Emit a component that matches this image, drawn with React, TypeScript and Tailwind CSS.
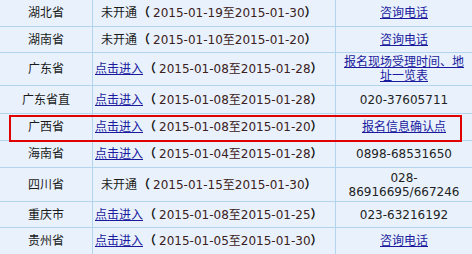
import React from "react";

type Row = {
  prov: string;
  open: boolean;
  start: string;
  end: string;
  third: { text: string[]; link: boolean };
  h: string;
};

const rows: Row[] = [
  { prov: "湖北省", open: false, start: "2015-01-19", end: "2015-01-30", third: { text: ["咨询电话"], link: true }, h: "h-[27px]" },
  { prov: "湖南省", open: false, start: "2015-01-10", end: "2015-01-20", third: { text: ["咨询电话"], link: true }, h: "h-[26px]" },
  { prov: "广东省", open: true, start: "2015-01-08", end: "2015-01-28", third: { text: ["报名现场受理时间、地", "址一览表"], link: true }, h: "h-[33px]" },
  { prov: "广东省直", open: true, start: "2015-01-08", end: "2015-01-28", third: { text: ["020-37605711"], link: false }, h: "h-[28px]" },
  { prov: "广西省", open: true, start: "2015-01-08", end: "2015-01-20", third: { text: ["报名信息确认点"], link: true }, h: "h-[27px]" },
  { prov: "海南省", open: true, start: "2015-01-04", end: "2015-01-28", third: { text: ["0898-68531650"], link: false }, h: "h-[27px]" },
  { prov: "四川省", open: false, start: "2015-01-15", end: "2015-01-30", third: { text: ["028-", "86916695/667246"], link: false }, h: "h-[34px]" },
  { prov: "重庆市", open: true, start: "2015-01-08", end: "2015-01-25", third: { text: ["023-63216192"], link: false }, h: "h-[26px]" },
  { prov: "贵州省", open: true, start: "2015-01-05", end: "2015-01-30", third: { text: ["咨询电话"], link: true }, h: "h-[26px]" },
];

export default function App() {
  return (
    <div
      className="relative w-[472px] h-[254px] overflow-hidden bg-[#e9f2fc] text-[12px] text-[#222]"
      style={{ fontFamily: '"DejaVu Sans", "Noto Sans CJK SC", sans-serif' }}
    >
      {rows.map((r, i) => (
        <div
          key={i}
          className={`grid grid-cols-[93px_243px_136px] ${r.h} ${i < rows.length - 1 ? "border-b border-[#b3d4ee]" : ""}`}
        >
          <div className="flex items-center justify-center border-r border-[#b3d4ee] text-[#1a1a1a]">
            {r.prov}
          </div>
          <div className="flex items-center border-r border-[#b3d4ee] pl-[2px] whitespace-nowrap">
            {r.open ? (
              <a className="underline text-[#1a1a9e] cursor-pointer">点击进入</a>
            ) : (
              <span className="pl-[6px] text-[#1a1a1a]">未开通</span>
            )}
            <span className="text-[#111] font-bold ml-[1px]">（</span>
            <span className="text-[#3a2020] ml-[3px]">
              {r.start}至{r.end}
            </span>
            <span className="text-[#111] font-bold">）</span>
          </div>
          <div className="flex flex-col items-center justify-center leading-[14px] text-center">
            {r.third.text.map((t, j) =>
              r.third.link ? (
                <a key={j} className="underline text-[#1a1a9e] cursor-pointer">
                  {t}
                </a>
              ) : (
                <span key={j} className="text-[#222]">
                  {t}
                </span>
              )
            )}
          </div>
        </div>
      ))}
      <div className="absolute left-[9px] top-[115px] w-[453px] h-[27px] border-2 border-[#e00000]" />
    </div>
  );
}
